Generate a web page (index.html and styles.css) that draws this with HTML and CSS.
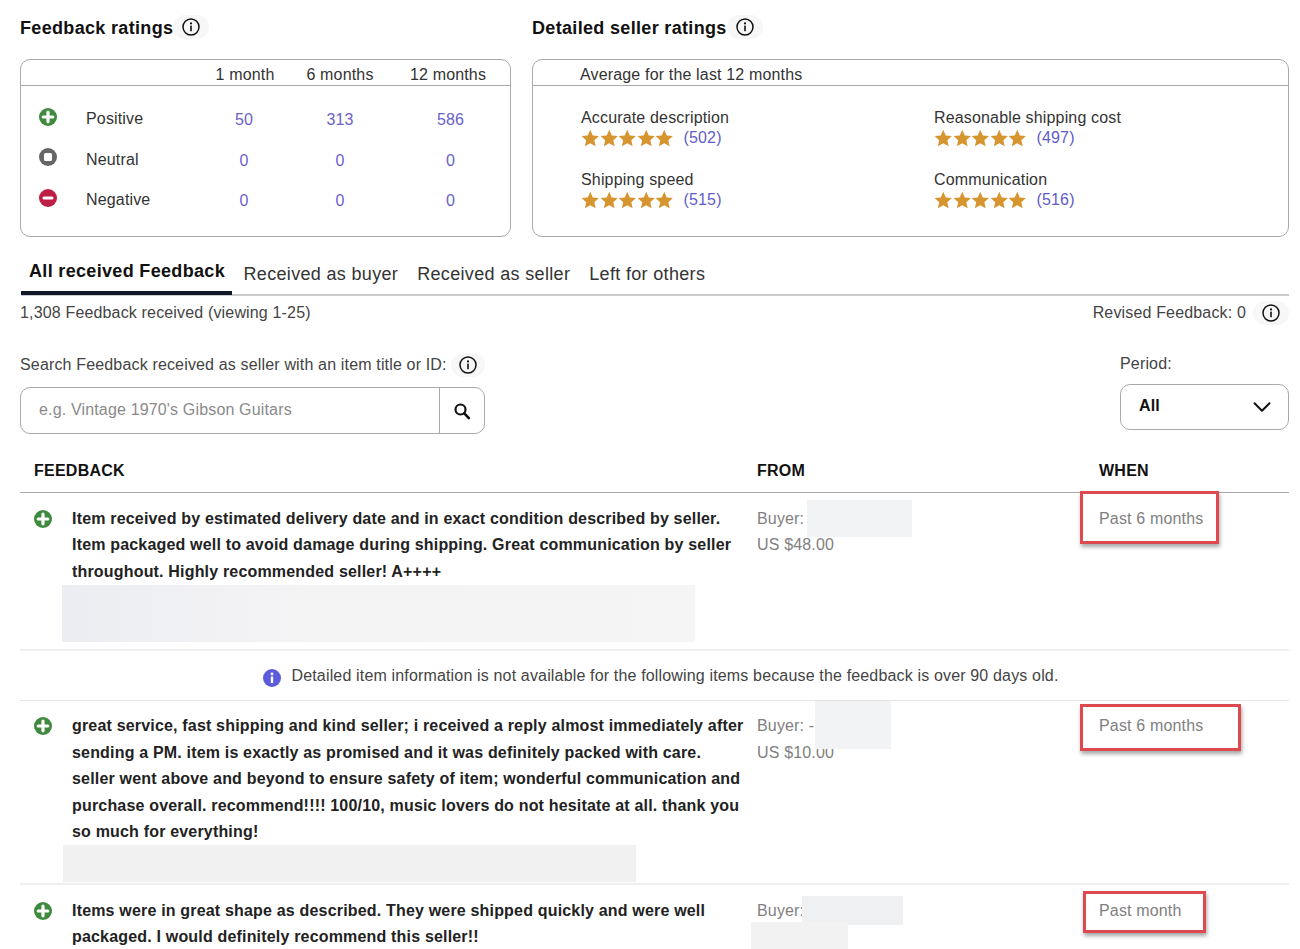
FILE: index.html
```html
<!DOCTYPE html>
<html lang="en">
<head>
<meta charset="utf-8">
<title>Feedback</title>
<link rel="stylesheet" href="styles.css">
</head>
<body>
<svg class="defs" width="0" height="0" aria-hidden="true">
  <symbol id="star" viewBox="0 0 20 20"><path d="M10 .8l2.8 6.3 6.8.7-5.1 4.6 1.5 6.8L10 15.7l-6 3.5 1.5-6.8L.4 7.8l6.8-.7z"/></symbol>
  <symbol id="info" viewBox="0 0 18 18"><circle cx="9" cy="9" r="8" fill="none" stroke="currentColor" stroke-width="1.5"/><circle cx="9" cy="5.4" r="1.05" fill="currentColor"/><rect x="8.2" y="7.6" width="1.6" height="5.6" rx=".5" fill="currentColor"/></symbol>
  <symbol id="pos" viewBox="0 0 18 18"><circle cx="9" cy="9" r="9" fill="currentColor"/><path d="M9 4.2v9.6M4.2 9h9.6" stroke="#fff" stroke-width="3.2" stroke-linecap="round"/></symbol>
  <symbol id="neu" viewBox="0 0 18 18"><circle cx="9" cy="9" r="9" fill="currentColor"/><rect x="5" y="5" width="8" height="8" rx="1.5" fill="#fff"/></symbol>
  <symbol id="neg" viewBox="0 0 18 18"><circle cx="9" cy="9" r="9" fill="currentColor"/><path d="M5 9h8" stroke="#fff" stroke-width="3" stroke-linecap="round"/></symbol>
</svg>
<main class="page">
  <section class="ratings">
    <div class="panel panel-left">
      <h2 class="heading">Feedback ratings <span class="tip tip-head"><svg class="info"><use href="#info"/></svg></span></h2>
      <div class="box">
        <div class="box-head months"><span></span><span></span><span>1 month</span><span>6 months</span><span>12 months</span></div>
        <div class="rating-table">
          <svg class="state pos"><use href="#pos"/></svg><span>Positive</span><a class="num">50</a><a class="num">313</a><a class="num last">586</a>
          <svg class="state neu"><use href="#neu"/></svg><span>Neutral</span><a class="num">0</a><a class="num">0</a><a class="num last">0</a>
          <svg class="state neg"><use href="#neg"/></svg><span>Negative</span><a class="num">0</a><a class="num">0</a><a class="num last">0</a>
        </div>
      </div>
    </div>
    <div class="panel panel-right">
      <h2 class="heading">Detailed seller ratings <span class="tip tip-head"><svg class="info"><use href="#info"/></svg></span></h2>
      <div class="box">
        <div class="box-head avg">Average for the last 12 months</div>
        <div class="dsr">
          <div class="dsr-item"><div>Accurate description</div><div class="stars-row"><span class="stars"><svg><use href="#star"/></svg><svg><use href="#star"/></svg><svg><use href="#star"/></svg><svg><use href="#star"/></svg><svg><use href="#star"/></svg></span><a class="count">(502)</a></div></div>
          <div class="dsr-item"><div>Reasonable shipping cost</div><div class="stars-row"><span class="stars"><svg><use href="#star"/></svg><svg><use href="#star"/></svg><svg><use href="#star"/></svg><svg><use href="#star"/></svg><svg><use href="#star"/></svg></span><a class="count">(497)</a></div></div>
          <div class="dsr-item"><div>Shipping speed</div><div class="stars-row"><span class="stars"><svg><use href="#star"/></svg><svg><use href="#star"/></svg><svg><use href="#star"/></svg><svg><use href="#star"/></svg><svg><use href="#star"/></svg></span><a class="count">(515)</a></div></div>
          <div class="dsr-item"><div>Communication</div><div class="stars-row"><span class="stars"><svg><use href="#star"/></svg><svg><use href="#star"/></svg><svg><use href="#star"/></svg><svg><use href="#star"/></svg><svg><use href="#star"/></svg></span><a class="count">(516)</a></div></div>
        </div>
      </div>
    </div>
  </section>

  <nav class="tabs">
    <a class="tab active">All received Feedback</a>
    <a class="tab">Received as buyer</a>
    <a class="tab">Received as seller</a>
    <a class="tab">Left for others</a>
  </nav>

  <div class="summary">
    <span>1,308 Feedback received (viewing 1-25)</span>
    <span class="revised">Revised Feedback: 0 <span class="tip tip-small tip-revised"><svg class="info"><use href="#info"/></svg></span></span>
  </div>

  <div class="filters">
    <div class="search">
      <div class="search-label">Search Feedback received as seller with an item title or ID: <span class="tip tip-small"><svg class="info"><use href="#info"/></svg></span></div>
      <div class="search-box">
        <span class="placeholder">e.g. Vintage 1970's Gibson Guitars</span>
        <span class="search-btn"><svg width="18" height="18" viewBox="0 0 18 18"><circle cx="7.5" cy="7.5" r="5" fill="none" stroke="#111" stroke-width="2.2"/><path d="M11.3 11.3l4.6 4.8" stroke="#111" stroke-width="2.6" stroke-linecap="round"/></svg></span>
      </div>
    </div>
    <div class="period">
      <div class="period-label">Period:</div>
      <div class="select"><b class="select-value">All</b><svg width="18" height="12" viewBox="0 0 18 12"><path d="M1.5 2.2L9 9.8l7.5-7.6" fill="none" stroke="#111" stroke-width="2" stroke-linecap="round" stroke-linejoin="round"/></svg></div>
    </div>
  </div>

  <div class="thead"><span class="th-fb">FEEDBACK</span><span>FROM</span><span>WHEN</span></div>

  <article class="row row-1">
    <svg class="state pos"><use href="#pos"/></svg>
    <div class="comment">
      <p>Item received by estimated delivery date and in exact condition described by seller. Item packaged well to avoid damage during shipping. Great communication by seller throughout. Highly recommended seller! A++++</p>
      <div class="redact redact-item-1"></div>
    </div>
    <div class="from">Buyer:<br>US $48.00<span class="redact patch-a"></span></div>
    <div class="when">Past 6 months<span class="mark mark-a"></span></div>
  </article>

  <div class="notice">
    <svg class="notice-icon" width="18" height="18" viewBox="0 0 18 18"><circle cx="9" cy="9" r="9" fill="#5b5bdc"/><circle cx="9" cy="5" r="1.4" fill="#fff"/><rect x="7.8" y="7.4" width="2.4" height="6.6" rx=".6" fill="#fff"/></svg>
    <span>Detailed item information is not available for the following items because the feedback is over 90 days old.</span>
  </div>

  <article class="row row-2">
    <svg class="state pos"><use href="#pos"/></svg>
    <div class="comment">
      <p>great service, fast shipping and kind seller; i received a reply almost immediately after sending a PM. item is exactly as promised and it was definitely packed with care. seller went above and beyond to ensure safety of item; wonderful communication and purchase overall. recommend!!!! 100/10, music lovers do not hesitate at all. thank you so much for everything!</p>
      <div class="redact redact-item-2"></div>
    </div>
    <div class="from">Buyer: -<br>US $10.00<span class="redact patch-b"></span></div>
    <div class="when">Past 6 months<span class="mark mark-b"></span></div>
  </article>

  <article class="row row-3">
    <svg class="state pos"><use href="#pos"/></svg>
    <div class="comment">
      <p>Items were in great shape as described. They were shipped quickly and were well packaged. I would definitely recommend this seller!!</p>
    </div>
    <div class="from">Buyer:<span class="redact patch-c"></span><span class="redact patch-d"></span></div>
    <div class="when">Past month<span class="mark mark-c"></span></div>
  </article>
</main>
</body>
</html>
```

FILE: styles.css
```css
* { box-sizing: border-box; }
html, body { margin: 0; height: 949px; overflow: hidden; background: #fff; }
body { font-family: "Liberation Sans", Arial, sans-serif; font-size: 16px; letter-spacing: .16px; color: #333; }
.defs { position: absolute; }
.page { padding: 0 11px 0 20px; }
p { margin: 0; }

.ratings { display: flex; gap: 21px; padding-top: 15px; }
.panel-left { width: 491px; flex: none; }
.panel-right { flex: 1; }
.heading { margin: 0 0 18px; height: 26px; font-size: 18px; line-height: 26px; font-weight: 700; color: #111; letter-spacing: .33px; display: flex; align-items: center; white-space: pre; }
.tip { display: inline-flex; align-items: center; justify-content: center; background: #f7f7f7; border-radius: 12px; color: #111; }
.tip-head { width: 36px; height: 24px; margin-left: -5.5px; margin-top: -2px; }
.tip-small { width: 36px; height: 24px; }
.tip-revised { margin-left: 7px; }
.info { width: 18px; height: 18px; }

.box { height: 178px; border: 1px solid #aaa; border-radius: 10px; }
.box-head { height: 26px; border-bottom: 1px solid #aaa; line-height: 30px; color: #333; }
.months, .rating-table { display: grid; grid-template-columns: 65px 110px 96px 96px 1fr; }
.months span { text-align: center; white-space: nowrap; }
.months span:nth-child(3) { padding-left: 2px; }
.months span:last-child { padding-right: 2px; }
.rating-table { padding-top: 13px; grid-auto-rows: 40.5px; align-items: center; }
.rating-table .state { margin: 0 0 5px 18px; }
.rating-table .num { text-align: center; color: #6a62c8; margin-top: 2px; }
.rating-table .last { padding-left: 3px; }
.state { width: 18px; height: 18px; display: block; }
.pos { color: #3f8a3e; }
.neu { color: #666; }
.neg { color: #bd1e44; }

.avg { padding-left: 47px; }
.dsr { display: grid; grid-template-columns: 353px 1fr; padding: 22px 0 0 48px; grid-auto-rows: 62px; }
.dsr-item { line-height: 20px; }
.stars-row { display: flex; align-items: center; height: 20px; gap: 10px; }
.stars { display: flex; color: #d6952f; height: 18px; }
.stars svg { width: 18.5px; height: 18px; fill: currentColor; display: block; }
.count { color: #625cc9; }

.tabs { display: flex; height: 45px; margin-top: 14px; margin-left: 1px; border-bottom: 2px solid #ccc; font-size: 18px; letter-spacing: .33px; color: #333; }
.tab { padding: 10px 9.5px 0; line-height: 26px; white-space: nowrap; }
.active { font-weight: 700; color: #111; margin-bottom: -1px; border-bottom: 4px solid #111827; padding: 7px 6px 0 8px; width: 211px; margin-right: 2px; }

.summary { display: flex; justify-content: space-between; align-items: center; height: 24px; margin-top: 5px; color: #444; }
.revised { display: flex; align-items: center; }

.filters { display: flex; justify-content: space-between; margin-top: 26px; }
.search { width: 465px; }
.search-label { display: flex; align-items: center; height: 24px; white-space: pre; color: #444; margin-top: 2px; }
.search-box { display: flex; height: 47px; margin-top: 10px; border: 1px solid #aaa; border-radius: 10px; }
.placeholder { flex: 1; padding-left: 18px; line-height: 43px; color: #8a8a8a; }
.search-btn { width: 45px; border-left: 1px solid #aaa; display: flex; align-items: center; justify-content: center; }
.period { width: 169px; }
.period-label { height: 24px; line-height: 24px; color: #444; margin-top: 1px; }
.select { display: flex; justify-content: space-between; align-items: center; height: 46px; margin-top: 8px; padding: 0 17px 0 18px; border: 1px solid #aaa; border-radius: 10px; color: #111; }
.select-value { margin-top: -3px; }

.thead { display: grid; grid-template-columns: 737px 342px 1fr; height: 59px; padding-top: 25px; line-height: 24px; border-bottom: 1px solid #aaa; font-weight: 700; color: #111; letter-spacing: .25px; }
.th-fb { padding-left: 14px; }

.row { position: relative; display: grid; grid-template-columns: 52px 685px 342px 1fr; }
.row .state { margin: 4px 0 0 14px; }
.comment { line-height: 26.5px; font-weight: 700; color: #222; letter-spacing: .18px; position: relative; }
.comment p { max-width: 675px; }
.row-1 { height: 158px; padding-top: 12.6px; border-bottom: 2px solid #eee; }
.row-2 { height: 184px; padding-top: 12.4px; border-bottom: 2px solid #eee; }
.row-3 { padding-top: 12.6px; }
.from, .when { color: #808080; line-height: 26.5px; }
.from { position: relative; }
.when { position: relative; }

.notice { display: flex; justify-content: center; align-items: center; gap: 10px; height: 50px; border-bottom: 1px solid #e4e4e4; color: #444; padding-left: 13px; }
.notice-icon { margin-top: 4px; }

.redact { background: #f2f3f5; }
.redact-item-1 { width: 633px; height: 57px; margin: .4px 0 0 -10px; background: linear-gradient(90deg, #ecedf2, #f4f4f5 40%, #f5f5f6); }
.redact-item-2 { width: 573px; height: 37px; margin: -1.4px 0 0 -9px; background: #f1f1f2; }
.patch-a, .patch-b, .patch-c, .patch-d { position: absolute; display: block; }
.patch-a { left: 50px; top: -6px; width: 105px; height: 37px; }
.patch-b { left: 58px; top: -12px; width: 76px; height: 48px; }
.patch-c { left: 45px; top: -2px; width: 101px; height: 29px; background: #eff0f2; }
.patch-d { left: -6px; top: 24px; width: 97px; height: 30px; background: #f2f2f3; }
.mark { position: absolute; display: block; border: 3px solid #dc4a4f; box-shadow: 1px 3px 4px rgba(0, 0, 0, .35); pointer-events: none; }
.mark-a { left: -19px; top: -15px; width: 139px; height: 53px; }
.mark-b { left: -19px; top: -9px; width: 161px; height: 47px; }
.mark-c { left: -16px; top: -7px; width: 123px; height: 42px; }
```
